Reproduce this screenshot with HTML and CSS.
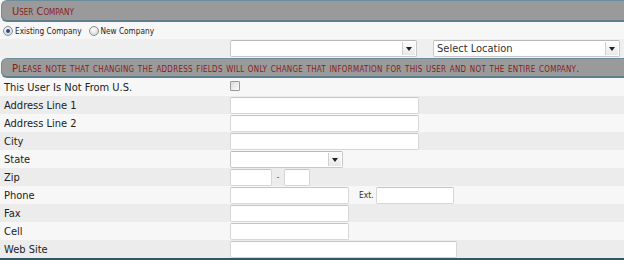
FILE: index.html
```html
<!DOCTYPE html>
<html>
<head>
<meta charset="utf-8">
<link rel="stylesheet" href="styles.css">
</head>
<body>
<div class="panel">
  <div class="hdr">User Company</div>
  <div class="radios">
    <span class="radio on"></span><span class="rlabel">Existing Company</span>
    <span class="radio"></span><span class="rlabel">New Company</span>
  </div>
  <div class="selrow">
    <div class="sel sel-co"><span class="val"></span><span class="arrow"></span></div>
    <div class="sel sel-loc"><span class="val">Select Location</span><span class="arrow"></span></div>
  </div>
  <div class="hdr note">Please note that changing the address fields will only change that information for this user and not the entire company.</div>
  <div class="rows">
    <div class="row light"><span class="lbl">This User Is Not From U.S.</span><div class="fld"><span class="chk"></span></div></div>
    <div class="row gray"><span class="lbl">Address Line 1</span><div class="fld"><span class="inp w189"></span></div></div>
    <div class="row light"><span class="lbl">Address Line 2</span><div class="fld"><span class="inp w189"></span></div></div>
    <div class="row gray"><span class="lbl">City</span><div class="fld"><span class="inp w189"></span></div></div>
    <div class="row light"><span class="lbl">State</span><div class="fld"><div class="sel sel-state"><span class="val"></span><span class="arrow"></span></div></div></div>
    <div class="row gray"><span class="lbl">Zip</span><div class="fld"><span class="inp w42"></span><span class="dash">-</span><span class="inp w26"></span></div></div>
    <div class="row light"><span class="lbl">Phone</span><div class="fld"><span class="inp w119"></span><span class="ext">Ext.</span><span class="inp w78"></span></div></div>
    <div class="row gray"><span class="lbl">Fax</span><div class="fld"><span class="inp w119"></span></div></div>
    <div class="row light"><span class="lbl">Cell</span><div class="fld"><span class="inp w119"></span></div></div>
    <div class="row gray"><span class="lbl">Web Site</span><div class="fld"><span class="inp w227"></span></div></div>
  </div>
</div>
</body>
</html>
```
FILE: styles.css
```css
html, body {
  margin: 0;
  padding: 0;
  background: #f6f6f6;
}
body {
  font-family: "DejaVu Sans Condensed", "DejaVu Sans", Tahoma, sans-serif;
  font-size: 11px;
  color: #222;
  width: 624px;
  height: 260px;
  overflow: hidden;
}
.panel {
  display: flex;
  flex-direction: column;
}
.hdr {
  box-sizing: border-box;
  height: 22px;
  background: #9a9a9a;
  border: 1px solid #6b8d9c;
  border-bottom: 2px solid #5d7f8f;
  border-right: none;
  border-radius: 6px 0 0 6px;
  color: #8a1c1c;
  font-variant: small-caps;
  font-size: 11px;
  padding-left: 10px;
  line-height: 21px;
  margin-left: 1px;
}
.note {
  height: 20px;
  font-size: 11.2px;
  letter-spacing: 0.25px;
  line-height: 19px;
}
.radios {
  height: 17px;
  display: flex;
  align-items: center;
  font-size: 8.2px;
  padding-left: 3px;
  background: #f7f7f7;
}
.radio {
  width: 8px;
  height: 8px;
  border-radius: 50%;
  border: 1px solid #8d8d8d;
  background: radial-gradient(circle at 40% 35%, #fff, #ccc);
  box-sizing: content-box;
  margin-right: 2px;
  position: relative;
}
.radio.on::after {
  content: "";
  position: absolute;
  left: 2px;
  top: 2px;
  width: 4px;
  height: 4px;
  border-radius: 50%;
  background: #1e4c8e;
}
.rlabel {
  margin-right: 7px;
}
.selrow {
  height: 19px;
  display: flex;
  align-items: center;
  background: #efefef;
  padding-left: 230px;
}
.sel {
  box-sizing: border-box;
  height: 17px;
  background: #fff;
  border: 1px solid #c8c8c8;
  border-top-color: #b8b8b8;
  border-radius: 2px;
  display: flex;
  align-items: center;
  position: relative;
}
.sel .val {
  flex: 1;
  padding-left: 3px;
  font-size: 11px;
  color: #333;
}
.sel .arrow {
  width: 12px;
  height: 13px;
  border-left: 1px solid #d0d0d0;
  margin-right: 1px;
  background: linear-gradient(#fdfdfd, #e8e8e8);
  position: relative;
}
.sel .arrow::after {
  content: "";
  position: absolute;
  left: 3px;
  top: 5px;
  border-left: 3px solid transparent;
  border-right: 3px solid transparent;
  border-top: 4px solid #222;
}
.sel-co { width: 187px; }
.sel-loc { width: 187px; margin-left: 16px; }
.sel-state { width: 113px; }
.rows {
  display: flex;
  flex-direction: column;
  border-bottom: 2px solid #2f5868;
}
.row {
  height: 18px;
  display: grid;
  grid-template-columns: 230px 1fr;
  align-items: center;
}
.row.light { background: #f7f7f7; }
.row.gray { background: #ececec; }
.lbl {
  padding-left: 4px;
  font-size: 11px;
  color: #222;
}
.fld {
  display: flex;
  align-items: center;
}
.inp {
  display: block;
  box-sizing: border-box;
  height: 17px;
  background: #fff;
  border: 1px solid #d6d6d6;
  border-top-color: #c4c4c4;
  border-radius: 2px;
}
.w189 { width: 189px; }
.w42 { width: 42px; }
.w26 { width: 26px; }
.w119 { width: 119px; }
.w78 { width: 78px; }
.w227 { width: 227px; }
.dash {
  width: 12px;
  text-align: center;
  font-size: 9px;
  color: #555;
}
.ext {
  font-size: 8.5px;
  margin-left: 10px;
  width: 17px;
  color: #333;
}
.chk {
  width: 10px;
  height: 10px;
  box-sizing: border-box;
  border: 1px solid #9a9a9a;
  background: linear-gradient(135deg, #dcdcdc, #fafafa);
  border-radius: 1px;
  margin-top: -2px;
}
```
